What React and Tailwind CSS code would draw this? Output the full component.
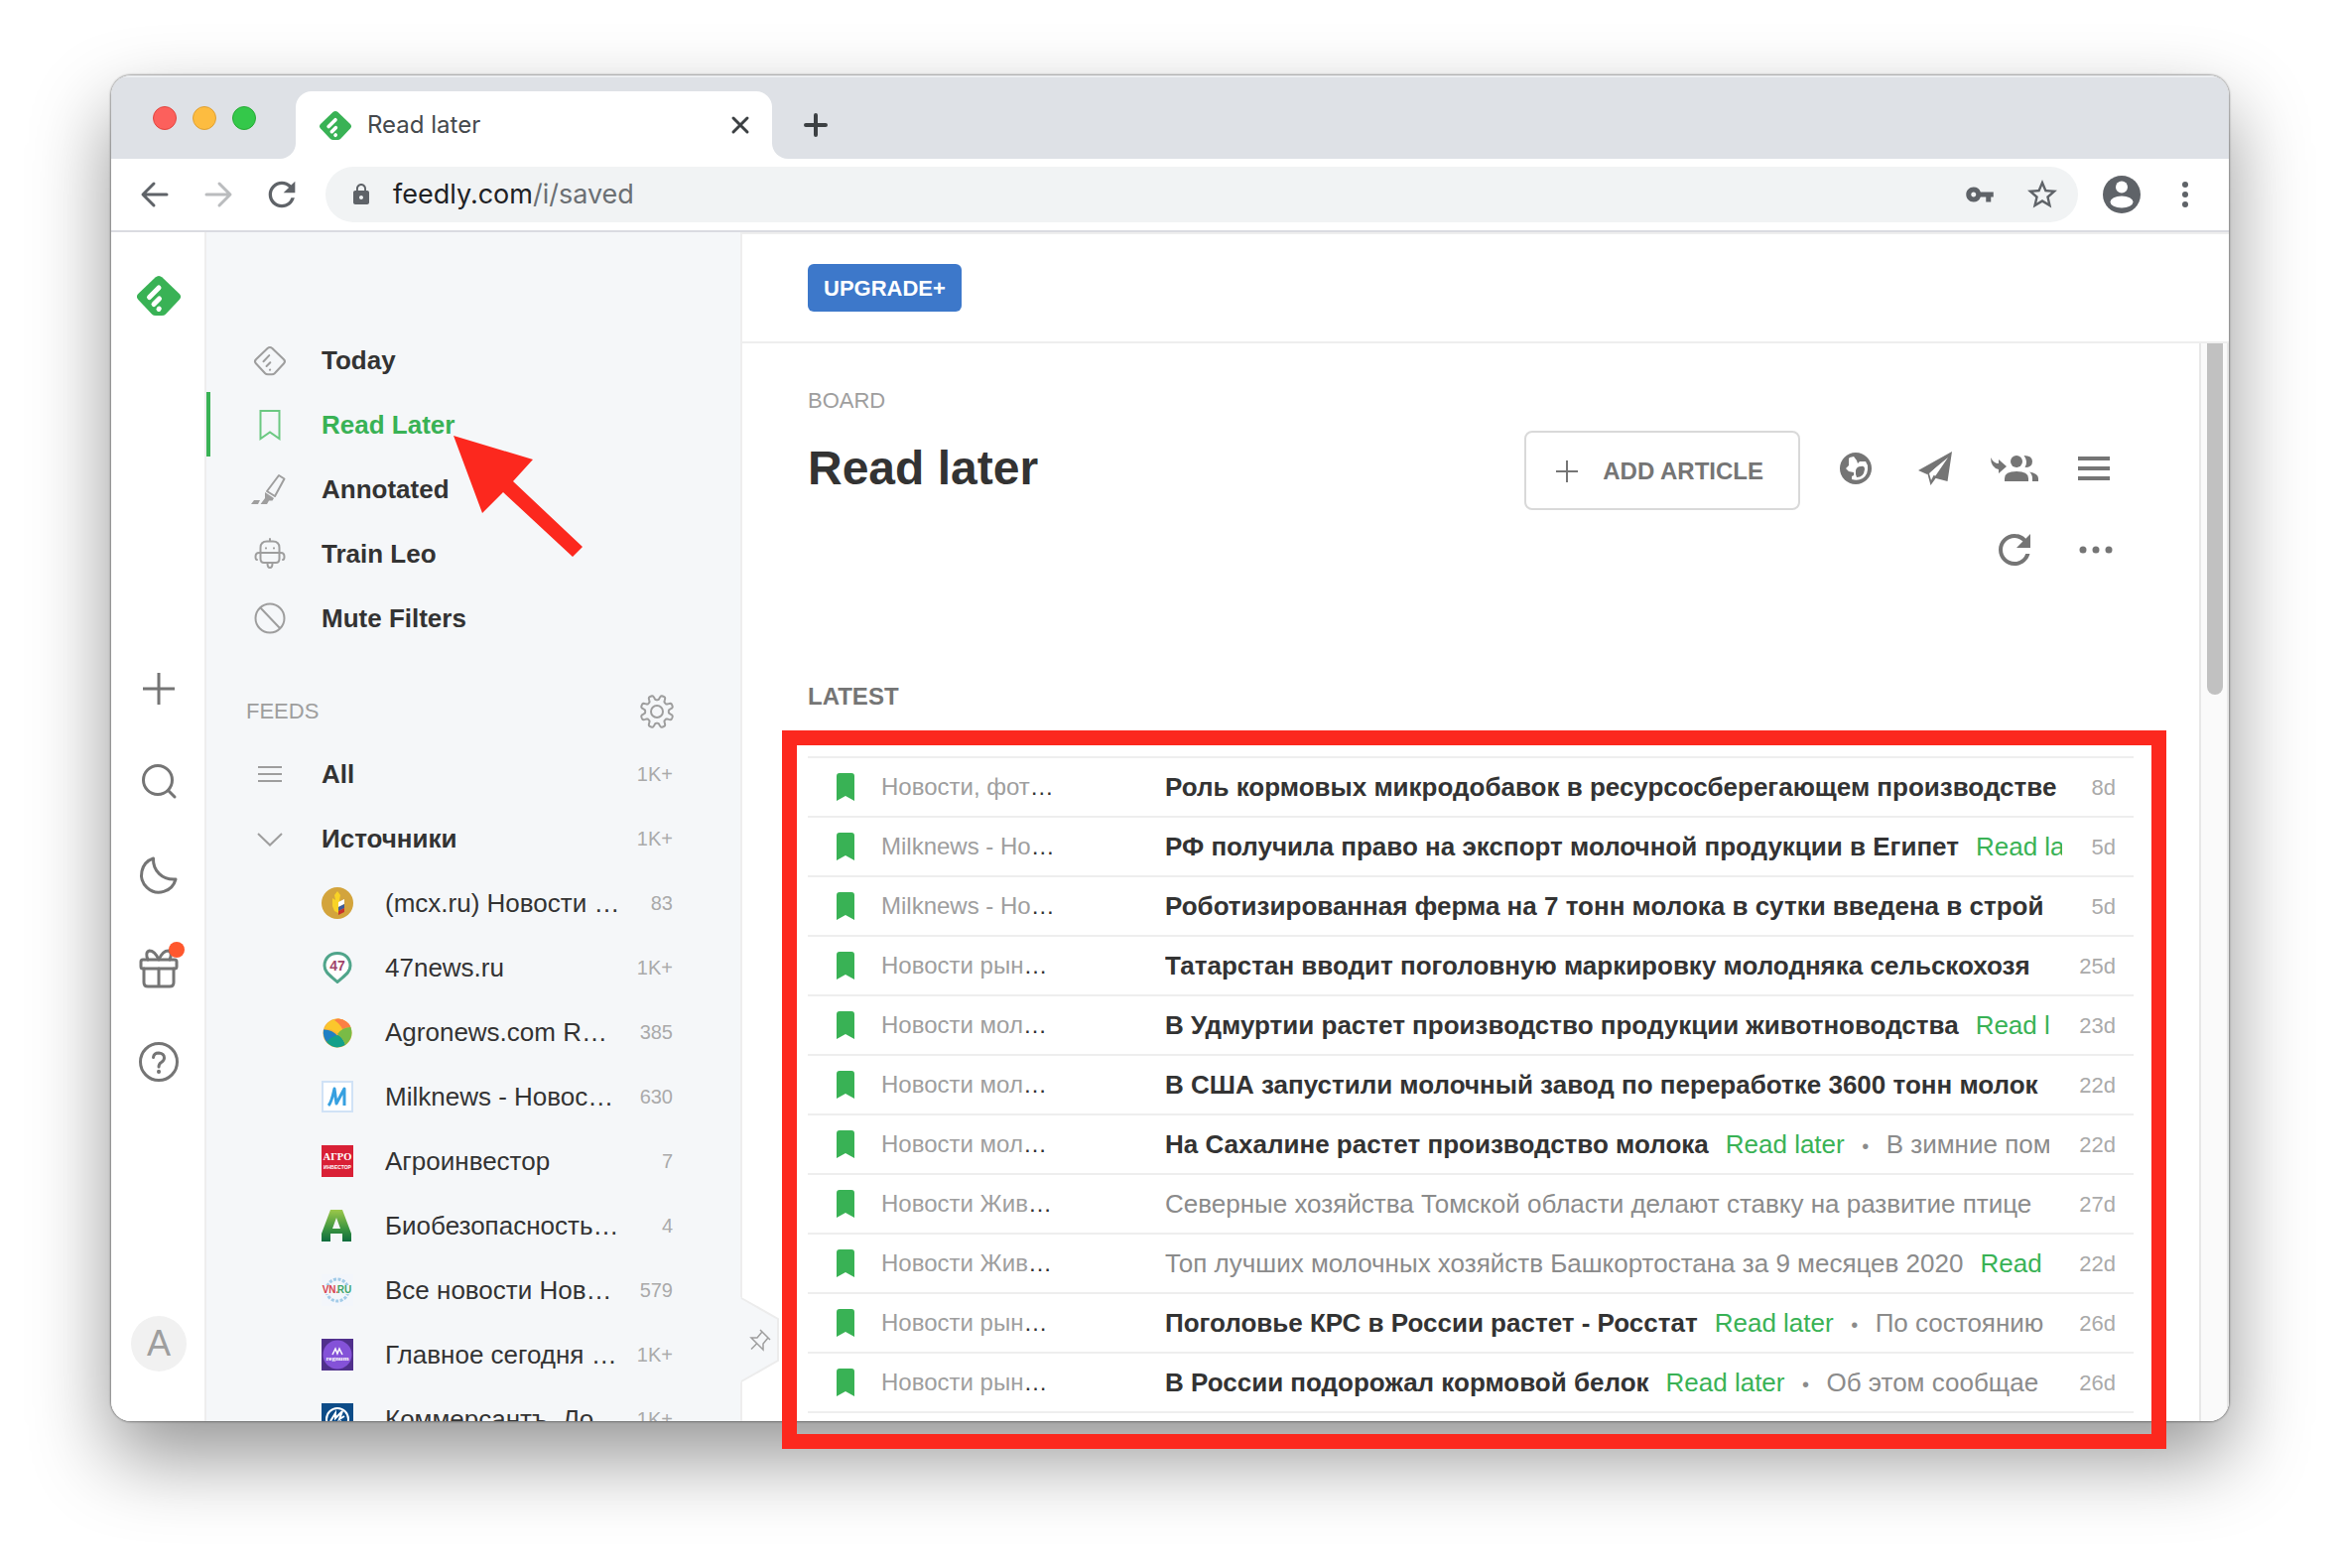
import React from "react";
import { MdLock, MdRefresh, MdStarBorder, MdVpnKey } from "react-icons/md";

const GEAR_PATH =
  Array.from({ length: 160 }, (_, i) => {
    const a = (i / 160) * Math.PI * 2;
    const r = 14.2 + 2.4 * Math.tanh(2.4 * Math.cos(8 * a + Math.PI));
    return `${i ? "L" : "M"}${(18 + r * Math.cos(a)).toFixed(2)} ${(18 + r * Math.sin(a)).toFixed(2)}`;
  }).join("") + "Z";

const DIAMOND =
  "M18.5 1.5Q22-1.5 25.5 1.5L42.7 18Q45.5 21 42.7 24L29 38.5Q27.5 40 25 40H19Q16.5 40 15 38.5L1.3 24Q-1.5 21 1.3 18Z";

function FeedlyLogo({ className }) {
  return (
    <svg viewBox="0 0 44 40" className={className} aria-hidden="true">
      <path d={DIAMOND} fill="#39b255" />
      <g stroke="#fff" strokeWidth="5" strokeLinecap="round">
        <path d="M12.5 21.5L22 12" />
        <path d="M17 28.5L22.5 23" />
        <path d="M22 33.4L22.3 33.1" />
      </g>
    </svg>
  );
}

function Line({ size = 32, box = 32, width = 2, children, className = "" }) {
  return (
    <svg
      width={size}
      height={size}
      viewBox={`0 0 ${box} ${box}`}
      fill="none"
      stroke="currentColor"
      strokeWidth={width}
      strokeLinejoin="round"
      strokeLinecap="round"
      className={`shrink-0 overflow-visible ${className}`}
      aria-hidden="true"
    >
      {children}
    </svg>
  );
}

const navIcons = {
  today: (
    <Line width={2}>
      <g transform="translate(1 3) scale(.68)" strokeWidth="3">
        <path d={DIAMOND} />
        <path d="M12.5 21L21 12M17 28L22.5 22.5M22 33.4L22.3 33.1" />
      </g>
    </Line>
  ),
  bookmark: (
    <Line width={2}>
      <path d="M6.500 2H25.500V30L16 23.500L6.500 30Z" strokeLinejoin="miter" />
    </Line>
  ),
  pen: (
    <Line width={2}>
      <path d="M25 2L30.500 5.500L21 23L13 18Z" />
      <path d="M11 19L20 25L18.500 27.500L15 27.500L13 31H6.500L11 25Z" fill="currentColor" stroke="none" />
      <path d="M0 27H6L4 31H-3Z" fill="currentColor" stroke="none" />
    </Line>
  ),
  robot: (
    <Line width={2}>
      <path d="M16 1V3M6.500 15V10Q6.500 3.500 13 3.500H19Q25.500 3.500 25.500 10V21Q25.500 25 22 25H10Q6.500 25 6.500 21V15M3 22Q1.500 22 1.500 19Q1.500 15 5 15H27Q30.500 15 30.500 19Q30.500 22 29 22M13.500 25.500Q13.500 30 16 30Q18.500 30 18.500 25.500" />
      <path d="M12 10.200V10.400M20 10.200V10.400" />
    </Line>
  ),
  mute: (
    <Line width={2}>
      <circle cx="16" cy="16" r="14.500" />
      <path d="M6.500 5.500L26 26" />
    </Line>
  ),
  all: (
    <Line width={2}>
      <path d="M4 9H28M4 16H28M4 23H28" strokeLinecap="butt" />
    </Line>
  ),
  chevron: (
    <Line width={2}>
      <path d="M4 11L16 22.500L28 11" strokeLinecap="butt" strokeLinejoin="miter" />
    </Line>
  ),
};

const railIcons = [
  {
    label: "Add content",
    icon: (
      <Line size={36} box={36} width={3}>
        <path d="M18 2V34M2 18H34" strokeLinecap="butt" />
      </Line>
    ),
  },
  {
    label: "Search",
    icon: (
      <Line size={36} box={36} width={3}>
        <circle cx="17" cy="16" r="14.500" />
        <path d="M28 27L34 33" />
      </Line>
    ),
  },
  {
    label: "Night mode",
    icon: (
      <Line size={38} box={38} width={3}>
        <path d="M13.500 2C13 14 22 24 36 23A17.500 17.500 0 1 1 13.500 2Z" />
      </Line>
    ),
  },
  {
    label: "What's new",
    badge: true,
    icon: (
      <Line size={40} box={40} width={3}>
        <rect x="2" y="11" width="36" height="9" rx="2" />
        <path d="M5 20V34Q5 38 9 38H31Q35 38 35 34V20M20 20V38M20 11Q16 2 10.500 2Q7 3 8 8L9 11M20 11Q24 2 29.500 2Q33 3 32 8L31 11" />
      </Line>
    ),
  },
  {
    label: "Help",
    icon: (
      <Line size={40} box={40} width={3}>
        <circle cx="20" cy="20" r="18.500" />
        <path d="M14.500 15.500Q15 11 20 11Q25.500 11.500 25.500 16Q25.500 18.500 22.500 20.500Q20 22 20 25" />
        <path d="M20 29.800V30" strokeWidth="4" />
      </Line>
    ),
  },
];

const label = { fontFamily: "Liberation Sans, sans-serif", fontWeight: 700, textAnchor: "middle" };
const serifLabel = { fontFamily: "Liberation Serif, serif", fontWeight: 700, textAnchor: "middle" };

const favicons = {
  mcx: (
    <>
      <circle cx="16" cy="16" r="16" fill="#d3a43c" />
      <path d="M16 4L19 8L18 13L19 15L17 26L13 24L11 19L11 11L14 13L13 8Z" fill="#f8d326" />
      <path d="M17 15L23 12V17L17 20Z" fill="#fff" />
      <path d="M17 20L23 17V21L17 24Z" fill="#3d5a9a" />
      <path d="M17 24L23 21V25L17 28Z" fill="#c8322b" />
    </>
  ),
  news47: (
    <>
      <path d="M16 1.500C8 1.500 3 7 3 14C3 21 9 24 16 30.500C23 24 29 21 29 14C29 7 24 1.500 16 1.500Z" fill="#fff" stroke="#50a58b" strokeWidth="3" />
      <text x="16" y="19" fontSize="14" fill="#a0456a" style={label}>47</text>
    </>
  ),
  agro: (
    <>
      <circle cx="16" cy="17" r="14.500" fill="#f6b13a" />
      <path d="M5 9Q9 3 17 2.500Q27 4 29 11Q22 11 17 18Q10 12 3 13Z" fill="#fbc62c" />
      <path d="M17 2.500Q27 4 29.500 11Q25 11 21 13Q19 8 13 4Q14 2.500 17 2.500Z" fill="#fb7f45" />
      <path d="M2 13.500Q10 13 16 19.500Q10 23 5 26Q1 20 2 13.500Z" fill="#1f7fc4" />
      <path d="M5 26Q10 20 17 19Q22 22 24 29Q13 35 5 26Z" fill="#13a08a" />
      <path d="M16 18Q21 11 29.500 11Q33 22 24 29Q22 22 16 18Z" fill="#79bb46" />
    </>
  ),
  milk: (
    <>
      <rect x="1" y="1" width="30" height="30" fill="#fff" stroke="#d0e2f6" strokeWidth="2" />
      <path d="M7 25Q10 22 13 8L15 23L23 8V25" fill="none" stroke="#36a0e0" strokeWidth="3" strokeLinejoin="round" />
    </>
  ),
  invest: (
    <>
      <rect width="32" height="32" fill="#d92036" />
      <text x="16" y="15" fontSize="10.5" fill="#fff" style={serifLabel}>АГРО</text>
      <text x="16" y="24" fontSize="5" fill="#fff" style={label}>ИНВЕСТОР</text>
    </>
  ),
  bio: (
    <>
      <defs>
        <linearGradient id="bioFill" x1="0" y1="0" x2="0" y2="1">
          <stop offset="0" stopColor="#9cc84a" />
          <stop offset=".6" stopColor="#3a9440" />
          <stop offset="1" stopColor="#0e6c3e" />
        </linearGradient>
      </defs>
      <path d="M9 0H21L30 24V32H21V24H9V32H0V24ZM15 8L11 19H19Z" fillRule="evenodd" fill="url(#bioFill)" />
    </>
  ),
  vn: (
    <>
      <rect width="32" height="32" fill="#f3f6fb" />
      <circle cx="16" cy="16" r="11" fill="none" stroke="#7fb9df" strokeWidth="3" strokeDasharray="3 1.500" strokeDashoffset="2" opacity=".7" />
      <rect x="2" y="11" width="28" height="9" fill="#f3f6fb" />
      <text x="9" y="19" fontSize="10" fill="#d8434f" style={label}>VN.</text>
      <text x="23" y="19" fontSize="10" fill="#3fa56a" style={label}>RU</text>
    </>
  ),
  regnum: (
    <>
      <rect width="32" height="32" fill="#50308c" />
      <circle cx="16" cy="16" r="14.500" fill="#8452d8" />
      <path d="M11 16L14 10L16 15L18 10L21 16" fill="none" stroke="#fff" strokeWidth="1.500" />
      <text x="16" y="22" fontSize="7" fill="#fff" style={serifLabel}>regnum</text>
    </>
  ),
  kom: (
    <>
      <rect width="32" height="32" fill="#0d4c88" />
      <circle cx="16" cy="16" r="11" fill="none" stroke="#fff" strokeWidth="2" />
      <path d="M9 18L14 10V15L21 8L18 16L23 13M11 22L20 18" fill="none" stroke="#fff" strokeWidth="2" />
    </>
  ),
};

const navItems = [
  { label: "Today", icon: "today" },
  { label: "Read Later", icon: "bookmark", active: true },
  { label: "Annotated", icon: "pen" },
  { label: "Train Leo", icon: "robot" },
  { label: "Mute Filters", icon: "mute" },
];

const feeds = [
  { icon: "mcx", title: "(mcx.ru) Новости …", count: "83" },
  { icon: "news47", title: "47news.ru", count: "1K+" },
  { icon: "agro", title: "Agronews.com R…", count: "385" },
  { icon: "milk", title: "Milknews - Новос…", count: "630" },
  { icon: "invest", title: "Агроинвестор", count: "7" },
  { icon: "bio", title: "Биобезопасность…", count: "4" },
  { icon: "vn", title: "Все новости Нов…", count: "579" },
  { icon: "regnum", title: "Главное сегодня …", count: "1K+" },
  { icon: "kom", title: "Коммерсантъ. Ло…", count: "1K+" },
];

const articles = [
  { source: "Новости, фот", title: "Роль кормовых микродобавок в ресурсосберегающем производстве", age: "8d", only: true },
  { source: "Milknews - Но", title: "РФ получила право на экспорт молочной продукции в Египет", age: "5d" },
  { source: "Milknews - Но", title: "Роботизированная ферма на 7 тонн молока в сутки введена в строй", age: "5d", only: true },
  { source: "Новости рын", title: "Татарстан вводит поголовную маркировку молодняка сельскохозя", age: "25d", only: true },
  { source: "Новости мол", title: "В Удмуртии растет производство продукции животноводства", age: "23d" },
  { source: "Новости мол", title: "В США запустили молочный завод по переработке 3600 тонн молок", age: "22d", only: true },
  { source: "Новости мол", title: "На Сахалине растет производство молока", excerpt: "В зимние пом", age: "22d" },
  { source: "Новости Жив", title: "Северные хозяйства Томской области делают ставку на развитие птице", age: "27d", read: true, only: true },
  { source: "Новости Жив", title: "Топ лучших молочных хозяйств Башкортостана за 9 месяцев 2020", age: "22d", read: true },
  { source: "Новости рын", title: "Поголовье КРС в России растет - Росстат", excerpt: "По состоянию", age: "26d" },
  { source: "Новости рын", title: "В России подорожал кормовой белок", excerpt: "Об этом сообщае", age: "26d" },
];

function TabStrip() {
  return (
    <div className="flex h-[84px] items-end bg-[#dee1e6] shadow-[inset_0_2px_0_#eceef1]">
      <div className="flex h-full items-center gap-4 pt-0.5 pl-[42px]">
        <button aria-label="Close window" className="size-6 rounded-full border border-[#e2463f] bg-[#fc605c]" />
        <button aria-label="Minimise window" className="size-6 rounded-full border border-[#dfa033] bg-[#fdbc40]" />
        <button aria-label="Zoom window" className="size-6 rounded-full border border-[#27aa35] bg-[#34c84a]" />
      </div>
      <div className="relative ml-10 flex h-[68px] w-[480px] items-center rounded-t-2xl bg-white pr-6 pl-6">
        <span className="absolute bottom-0 -left-4 size-4 rounded-br-2xl shadow-[6px_6px_0_6px_#fff]" />
        <span className="absolute -right-4 bottom-0 size-4 rounded-bl-2xl shadow-[-6px_6px_0_6px_#fff]" />
        <FeedlyLogo className="h-[29px] w-8" />
        <span className="ml-4 flex-1 font-[Inter,sans-serif] text-2xl text-[#45494d]">Read later</span>
        <button aria-label="Close tab" className="text-[#3c4043]">
          <Line size={16} box={16} width={3}>
            <path d="M1 1L15 15M15 1L1 15" />
          </Line>
        </button>
      </div>
      <button aria-label="New tab" className="ml-8 flex h-[68px] items-center text-[#3c4043]">
        <Line size={24} box={24} width={4}>
          <path d="M12 2V22M2 12H22" />
        </Line>
      </button>
    </div>
  );
}

function Toolbar() {
  return (
    <div className="relative flex h-[74px] items-center border-b-2 border-[#dadbe1] bg-white pl-7 text-[#5f6368]">
      <button aria-label="Back">
        <Line size={32} box={32} width={3}>
          <path d="M28 16H5M15 5L4 16L15 27" />
        </Line>
      </button>
      <button aria-label="Forward" className="ml-8 text-[#babcbe]">
        <Line size={32} box={32} width={3}>
          <path d="M4 16H27M17 5L28 16L17 27" />
        </Line>
      </button>
      <button aria-label="Reload" className="ml-7">
        <MdRefresh size={40} />
      </button>
      <div className="ml-6 flex h-14 flex-1 items-center rounded-full bg-[#f1f3f4] pr-[18px] pl-6">
        <MdLock size={24} />
        <div className="relative ml-5 flex-1 font-[Inter,sans-serif] text-[27px] leading-10">
          <input
            aria-label="Address"
            defaultValue="feedly.com/i/saved"
            className="h-10 w-full bg-transparent text-transparent outline-none"
          />
          <span className="pointer-events-none absolute inset-0" aria-hidden="true">
            <span className="text-[#202124]">feedly.com</span>
            <span className="text-[#6b6f73]">/i/saved</span>
          </span>
        </div>
        <button aria-label="Saved passwords"><MdVpnKey size={30} /></button>
        <button aria-label="Bookmark this page" className="ml-[30px]"><MdStarBorder size={36} /></button>
      </div>
      <button aria-label="Profile" className="ml-6">
        <svg width="40" height="40" viewBox="0 0 40 40" aria-hidden="true">
          <circle cx="20" cy="20" r="19" fill="#5f6368" />
          <circle cx="20" cy="12.500" r="6" fill="#fff" />
          <ellipse cx="20" cy="27.500" rx="11.500" ry="6" fill="#fff" />
        </svg>
      </button>
      <button aria-label="Menu" className="mr-8 ml-8">
        <svg width="24" height="32" viewBox="0 0 24 32" fill="#5f6368" aria-hidden="true">
          <circle cx="12" cy="6" r="3" />
          <circle cx="12" cy="16" r="3" />
          <circle cx="12" cy="26" r="3" />
        </svg>
      </button>
    </div>
  );
}

function Rail() {
  return (
    <nav aria-label="Tools" className="flex w-24 shrink-0 flex-col items-center border-r-2 border-[#eee] bg-white pt-11 pb-[50px] pl-0.5">
      <a href="#home" aria-label="Feedly"><FeedlyLogo className="h-10 w-11" /></a>
      <div className="mt-[329px] flex flex-col text-[#757575]">
        {railIcons.map((r) => (
          <button key={r.label} aria-label={r.label} className="relative flex h-[94px] w-[92px] items-center justify-center">
            {r.icon}
            {r.badge && <span className="absolute top-5 right-5 size-4 rounded-full bg-[#ff572d]" />}
          </button>
        ))}
      </div>
      <button aria-label="Account" className="mt-auto flex size-14 items-center justify-center rounded-full bg-[#f1f1f1] text-[36px] text-[#9e9e9e]">
        A
      </button>
    </nav>
  );
}

function Sidebar() {
  return (
    <aside className="relative w-[540px] shrink-0 border-r-2 border-[#eee] bg-[#f5f7f9]">
      <div className="h-full overflow-hidden pt-24 text-[26px] leading-8 text-[#333]">
        <ul>
          {navItems.map((n) => (
            <li key={n.label}>
              <a
                href={`#${n.icon}`}
                className={`flex h-[65px] items-center border-l-4 pl-11 font-bold ${
                  n.active ? "border-[#39b255] text-[#39b255]" : "border-transparent"
                }`}
              >
                <span className={n.active ? "text-[#6cc982]" : "text-[#9e9e9e]"}>{navIcons[n.icon]}</span>
                <span className="ml-9">{n.label}</span>
              </a>
            </li>
          ))}
        </ul>
        <div className="mt-8 flex h-[60px] items-center justify-between pr-[66px] pl-10">
          <h2 className="text-[22px] text-[#9e9e9e]">FEEDS</h2>
          <button aria-label="Organise feeds" className="text-[#9e9e9e]">
            <Line size={36} box={36} width={2}>
              <path d={GEAR_PATH} />
              <circle cx="18" cy="18" r="6" />
            </Line>
          </button>
        </div>
        <ul>
          {[["All", "all"], ["Источники", "chevron"]].map(([name, icon]) => (
            <li key={name}>
              <a href={`#${icon}`} className="flex h-[65px] items-center pr-[68px] pl-12">
                <span className="text-[#9e9e9e]">{navIcons[icon]}</span>
                <span className="ml-9 flex-1 font-bold">{name}</span>
                <span className="text-xl text-[#aaa]">1K+</span>
              </a>
            </li>
          ))}
          {feeds.map((f) => (
            <li key={f.icon}>
              <a href={`#${f.icon}`} className="flex h-[65px] items-center pr-[68px] pl-[116px]">
                <svg width="32" height="32" viewBox="0 0 32 32" className="shrink-0" aria-hidden="true">
                  {favicons[f.icon]}
                </svg>
                <span className="ml-8 flex-1 whitespace-nowrap">{f.title}</span>
                <span className="text-xl text-[#aaa]">{f.count}</span>
              </a>
            </li>
          ))}
        </ul>
      </div>
      <button aria-label="Pin sidebar" className="absolute -right-10 bottom-[39px] z-10 text-[#9e9e9e]">
        <svg width="40" height="86" viewBox="0 0 40 86" fill="none" aria-hidden="true">
          <path d="M0 0L39 22V64L0 86Z" fill="#f5f7f9" />
          <path d="M1 1L38 22V64L1 85" stroke="#ececec" strokeWidth="2" />
          <path
            d="M20 33L30 43M22 35L17 41L11 41L23 53L23 47L28 41M16.500 47L11 52.500"
            stroke="currentColor"
            strokeWidth="1.500"
          />
        </svg>
      </button>
    </aside>
  );
}

function ActionIcon({ label: name, children }) {
  return (
    <button aria-label={name} className="flex h-[76px] w-20 items-center justify-center">
      {children}
    </button>
  );
}

function BoardHeader() {
  return (
    <div className="flex justify-between">
      <div>
        <p className="text-[22px] leading-7 text-[#9e9e9e]">BOARD</p>
        <h1 className="mt-6 text-[48px] leading-[60px] font-bold text-[#333]">Read later</h1>
      </div>
      <div className="flex flex-col items-end pt-11 text-[#757575]">
        <div className="flex items-start">
          <button className="mr-4 flex h-20 items-center rounded-lg border-2 border-[#d9d9d9] pt-0.5 pr-[35px] pl-[29px] text-2xl font-bold">
            <Line size={24} box={24} width={2}>
              <path d="M12 1V23M1 12H23" strokeLinecap="butt" />
            </Line>
            <span className="ml-6">ADD ARTICLE</span>
          </button>
          <ActionIcon label="Make public">
            <svg width="32" height="32" viewBox="0 0 32 32" aria-hidden="true">
              <circle cx="16" cy="16" r="16" fill="currentColor" />
              <path d="M10 5L14 4L17 8L18 11L20 9L26 9L28 13Q29 22 23 26Q18 29 12 27L12 24L14 23L14 20L9 19L6 16L9 13V6Z" fill="#fff" />
              <path d="M16 18Q17 14 21 14Q25 13 25 17Q24 25 17 25Q15.500 22 16 18Z" fill="currentColor" />
            </svg>
          </ActionIcon>
          <ActionIcon label="Share by email">
            <svg width="34" height="34" viewBox="0 0 34 34" fill="currentColor" aria-hidden="true">
              <path d="M34 0L0 19L9 23L30 6L16 26.500L29.500 30Z" />
              <path d="M9 21L12.500 34L19 25L15.500 24L13 29L11 22L30 4Z" />
            </svg>
          </ActionIcon>
          <ActionIcon label="Share with team">
            <svg width="48" height="26" viewBox="0 0 48 26" fill="currentColor" aria-hidden="true">
              <path d="M0 2Q3 8 8 8V4L16 11L8 18V14Q0 12 0 2Z" />
              <circle cx="26" cy="6" r="6" />
              <path d="M14 26V23Q14 16 26 16Q38 16 38 23V26Z" />
              <path d="M33.500 0Q42 0 42 6Q42 12 34.500 12Q38 6 33.500 0Z" />
              <path d="M39 16.500Q48 18 48 23V26H42V23Q42 19 39 16.500Z" />
            </svg>
          </ActionIcon>
          <ActionIcon label="Change layout">
            <svg width="32" height="24" viewBox="0 0 32 24" fill="currentColor" aria-hidden="true">
              <path d="M0 0H32V4H0ZM0 10H32V14H0ZM0 20H32V24H0Z" />
            </svg>
          </ActionIcon>
        </div>
        <div className="flex h-20 items-center">
          <ActionIcon label="Refresh"><MdRefresh size={48} /></ActionIcon>
          <ActionIcon label="More">
            <svg width="34" height="8" viewBox="0 0 34 8" fill="currentColor" className="ml-1" aria-hidden="true">
              <circle cx="4" cy="4" r="3.500" />
              <circle cx="17" cy="4" r="3.500" />
              <circle cx="30" cy="4" r="3.500" />
            </svg>
          </ActionIcon>
        </div>
      </div>
    </div>
  );
}

function ArticleRow({ a }) {
  return (
    <li className="flex h-[60px] items-center border-t-2 border-[#eee] pr-[18px] pl-[29px] last:h-[62px] last:border-b-2">
      <button aria-label="Remove from Read later" className="text-[#39b255]">
        <svg width="18" height="28" viewBox="0 0 18 28" fill="currentColor" aria-hidden="true">
          <path d="M0 3Q0 0 3 0H15Q18 0 18 3V28L9 23L0 28Z" />
        </svg>
      </button>
      <span className="ml-[27px] w-[286px] shrink-0 text-2xl text-[#333]">
        <span className="text-[#9e9e9e]">{a.source}</span>…
      </span>
      <div className="min-w-0 flex-1 overflow-hidden text-[26px] leading-9 whitespace-nowrap">
        <a href="#article" className={a.read ? "text-[#8b8b8b]" : "font-bold text-[#333]"}>{a.title}</a>
        {!a.only && <span className="ml-[17px] text-[#39b255]">Read later</span>}
        {a.excerpt && (
          <>
            <span className="inline-block w-[42px] text-center text-xl text-[#8b8b8b]">•</span>
            <span className="text-[#8b8b8b]">{a.excerpt}</span>
          </>
        )}
      </div>
      <time className="ml-[30px] text-[22px] text-[#aaa]">{a.age}</time>
    </li>
  );
}

export default function App() {
  return (
    <div className="h-screen overflow-hidden bg-white px-28 pt-[76px] pb-[148px] font-['Liberation_Sans',Arial,sans-serif]">
      <div className="relative h-full">
        <div className="flex h-full flex-col overflow-hidden rounded-[20px] bg-white shadow-[0_0_2px_1px_rgba(0,0,0,0.35),0_36px_80px_rgba(0,0,0,0.42)]">
          <TabStrip />
          <Toolbar />
          <div className="flex min-h-0 flex-1">
            <Rail />
            <Sidebar />
            <main className="flex min-w-0 flex-1 flex-col">
              <header className="flex h-28 shrink-0 items-center border-y-2 border-[#eee] pl-[66px]">
                <button className="flex h-12 items-center rounded-md bg-[#3d78ca] px-4 text-[22px] font-bold text-white">
                  UPGRADE+
                </button>
              </header>
              <div className="flex min-h-0 flex-1">
                <div className="min-w-0 flex-1 overflow-hidden px-[66px] pt-11">
                  <BoardHeader />
                  <h2 className="mt-[94px] text-2xl leading-7 font-bold text-[#757575]">LATEST</h2>
                  <ul className="mt-[46px]">
                    {articles.map((a, i) => (
                      <ArticleRow key={i} a={a} />
                    ))}
                  </ul>
                </div>
                <div className="w-[30px] shrink-0 border-x-2 border-[#e8e8e8] bg-[#fafafa] px-[6px]" aria-hidden="true">
                  <div className="h-[354px] w-4 rounded-b-full bg-[#c1c1c1]" />
                </div>
              </div>
            </main>
          </div>
        </div>
        <svg width="130" height="122" viewBox="0 0 130 122" className="pointer-events-none absolute top-[363px] left-[345px]" aria-hidden="true">
          <path d="M0 0L80 24L60 46L130 112L120 122L50 57L29 78Z" fill="#fc281e" />
        </svg>
        <div className="pointer-events-none absolute top-[660px] right-[63px] -bottom-7 left-[676px] border-[15px] border-[#fc281e]" />
      </div>
    </div>
  );
}
